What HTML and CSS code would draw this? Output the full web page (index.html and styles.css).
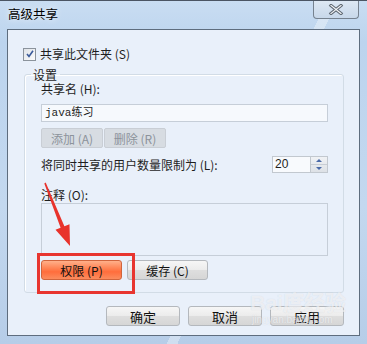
FILE: index.html
```html
<!DOCTYPE html>
<html lang="zh-CN">
<head>
  <meta charset="UTF-8" />
  <title>高级共享</title>
  <link rel="stylesheet" href="styles.css">
</head>
<body>

  <div class="window">
    <div class="titlebar">
      <span class="title">高级共享</span>
      <div class="close-btn">
        <svg width="16" height="11" viewBox="0 0 16 11">
          <path d="M3 1.5 L13 9.5 M13 1.5 L3 9.5" stroke="#5d6670" stroke-width="3.2" stroke-linecap="square"/>
          <path d="M3 1.5 L13 9.5 M13 1.5 L3 9.5" stroke="#f4f6f8" stroke-width="1.2" stroke-linecap="square"/>
        </svg>
      </div>
    </div>

    <div class="panel">
      <label class="check-row">
        <span class="checkbox">
          <svg width="8" height="8" viewBox="0 0 8 8">
            <path d="M1 4 L3 6.5 L7 0.8" stroke="#3a5a9a" stroke-width="1.6" fill="none"/>
          </svg>
        </span>
        共享此文件夹 (S)
      </label>

      <fieldset class="group">
        <legend>设置</legend>

        <div class="field-label first">共享名 (H):</div>
        <div class="text-input">java练习</div>

        <div class="btn-row small">
          <span class="btn disabled">添加 (A)</span>
          <span class="btn disabled">删除 (R)</span>
        </div>

        <div class="limit-row">
          <span>将同时共享的用户数量限制为 (L):</span>
          <div class="spinner">
            <span class="spin-value">20</span>
            <span class="spin-btns">
              <span class="spin-up"></span>
              <span class="spin-down"></span>
            </span>
          </div>
        </div>

        <div class="field-label note-label">注释 (O):</div>
        <div class="text-area"></div>

        <div class="btn-row wide">
          <span class="btn hot">权限 (P)</span>
          <span class="btn">缓存 (C)</span>
        </div>
      </fieldset>

      <div class="dialog-buttons">
        <span class="btn">确定</span>
        <span class="btn">取消</span>
        <span class="btn">应用</span>
      </div>
    </div>

    <!-- annotation drawn over the screenshot -->
    <div class="mark-box"></div>
    <svg class="mark-arrow" width="367" height="344" viewBox="0 0 367 344">
      <polygon points="44.3,183.4 45.7,182.6 64.4,226.3 69.5,224.2 70,246 55.5,229.8 60.6,227.7" fill="#e8332c"/>
    </svg>
    <div class="watermark">
      <span class="wm-big">Bai<b>度</b>经验</span>
      <span class="wm-small">jingyan.baidu.com</span>
    </div>
  </div>

</body>
</html>
```

FILE: styles.css
```css
body {
  margin: 0;
  font-family: "Noto Sans CJK SC", "DejaVu Sans", sans-serif;
  font-size: 12px;
  color: #1e1e1e;
}

.window {
  position: relative;
  width: 367px;
  height: 344px;
  box-sizing: border-box;
  padding: 0 7px 0 7px;
  border-top: 1px solid #4b5563;
  background:
    linear-gradient(115deg, transparent 0 62%, rgba(255,255,255,0.35) 62% 64%, transparent 64%),
    linear-gradient(180deg, #c9ddf2 0%, #bcd4ee 12%, #c3d8ef 60%, #b6cde8 100%);
  overflow: hidden;
}

.titlebar {
  height: 28px;
  display: flex;
  align-items: flex-start;
  justify-content: space-between;
}

.title {
  margin: 5px 0 0 1px;
  line-height: 15px;
  font-size: 12.5px;
  color: #000;
  text-shadow: 0 0 6px rgba(255,255,255,0.9);
}

.close-btn {
  width: 44px;
  height: 17px;
  margin-right: 1px;
  border: 1px solid #76828f;
  border-top: none;
  border-radius: 0 0 4px 4px;
  background: linear-gradient(180deg, #dde8f3, #c8d8ea);
  display: flex;
  align-items: center;
  justify-content: center;
}

.panel {
  height: 307px;
  box-sizing: border-box;
  border: 1px solid #5e6d7e;
  background: #e9f0fa;
  padding: 17px 15px 0 15px;
}

.check-row {
  display: flex;
  align-items: center;
  height: 14px;
  line-height: 14px;
  gap: 4px;
}

.checkbox {
  width: 11px;
  height: 11px;
  border: 1px solid #8b939c;
  background: linear-gradient(135deg, #dfe3e8, #fbfbfb);
  display: flex;
  align-items: center;
  justify-content: center;
  box-sizing: content-box;
}

.group {
  margin: 7px 0 0 1px;
  width: 320px;
  box-sizing: border-box;
  padding: 0 15px 12px 16px;
  border: 1px solid #d2dce6;
  border-radius: 3px;
  box-shadow: inset 1px 1px 0 #fff;
}

.group legend {
  padding: 0 3px 0 2px;
  margin-left: -10px;
  line-height: 13px;
}

.field-label {
  line-height: 14px;
}

.field-label.first {
  margin-top: 1px;
}

.text-input {
  margin-top: 8px;
  height: 18px;
  box-sizing: border-box;
  border: 1px solid #c6ced8;
  background: #f6f9fd;
  padding: 1px 3px;
  line-height: 15px;
  font-family: "Liberation Mono", "Noto Sans CJK SC", monospace;
  font-size: 11px;
}

.btn {
  display: flex;
  align-items: center;
  justify-content: center;
  height: 20px;
  box-sizing: border-box;
  border: 1px solid #b4b8bd;
  border-radius: 3px;
  background: linear-gradient(180deg, #f6f6f6 0%, #ececec 48%, #dedede 52%, #d6d6d6 100%);
  color: #111;
}

.btn-row {
  display: flex;
}

.btn-row.small {
  margin-top: 6px;
  gap: 1px;
}

.btn-row.small .btn {
  width: 62px;
}

.btn.disabled {
  background: #d7dce2;
  border-color: #c9ced5;
  border-radius: 2px;
  color: #8c939b;
}

.limit-row {
  margin-top: 8px;
  height: 17px;
  display: flex;
  align-items: center;
  justify-content: space-between;
}

.spinner {
  width: 56px;
  height: 17px;
  box-sizing: border-box;
  border: 1px solid #c2c8cf;
  background: #f8fafd;
  display: flex;
}

.spin-value {
  flex: 1;
  padding-left: 2px;
  line-height: 15px;
  font-family: "Liberation Sans", sans-serif;
  font-size: 12px;
}

.spin-btns {
  width: 16px;
  display: flex;
  flex-direction: column;
  border-left: 1px solid #c2c8cf;
  background: linear-gradient(180deg, #f0f2f5, #dde1e6);
}

.spin-up,
.spin-down {
  flex: 1;
  position: relative;
}

.spin-up { border-bottom: 1px solid #c8cdd4; }

.spin-up::after,
.spin-down::after {
  content: "";
  position: absolute;
  left: 5px;
  border-left: 3px solid transparent;
  border-right: 3px solid transparent;
}

.spin-up::after {
  top: 2px;
  border-bottom: 3px solid #4a6aa8;
}

.spin-down::after {
  top: 2px;
  border-top: 3px solid #4a6aa8;
}

.note-label {
  margin-top: 15px;
}

.text-area {
  margin-top: 1px;
  height: 53px;
  box-sizing: border-box;
  border: 1px solid #c6ced8;
  background: #e9f0fa;
}

.btn-row.wide {
  margin-top: 4px;
  gap: 5px;
}

.btn-row.wide .btn {
  width: 81px;
}

.btn.hot {
  border-color: #d0643c;
  background: linear-gradient(180deg, #ffb08a 0%, #ff8455 40%, #ff6d3c 60%, #fb8c5e 100%);
}

.dialog-buttons {
  margin-top: 13px;
  display: flex;
  justify-content: flex-end;
  gap: 8px;
}

.dialog-buttons .btn {
  width: 74px;
  font-size: 13px;
}

.mark-box {
  position: absolute;
  left: 37px;
  top: 252px;
  width: 98px;
  height: 41px;
  box-sizing: border-box;
  border: 3px solid #e8352f;
}

.mark-arrow {
  position: absolute;
  left: 0;
  top: -1px;
}

.watermark {
  position: absolute;
  left: 250px;
  top: 290px;
  display: flex;
  flex-direction: column;
  color: rgba(255,255,255,0.6);
  text-shadow: 0 0 1px rgba(120,130,150,0.25);
  pointer-events: none;
}

.wm-big {
  font-family: "Liberation Sans", "Noto Sans CJK SC", sans-serif;
  font-size: 21px;
  font-weight: bold;
  line-height: 23px;
}

.wm-small {
  font-family: "Liberation Sans", sans-serif;
  font-size: 10px;
  margin-left: 2px;
  line-height: 11px;
}
```
